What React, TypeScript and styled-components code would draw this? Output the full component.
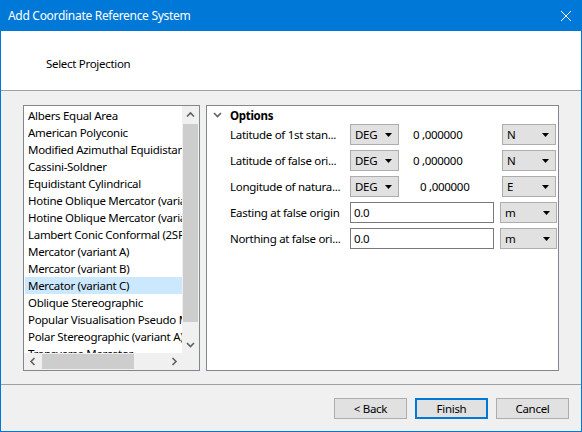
import React from "react";
import styled, { createGlobalStyle } from "styled-components";

const Global = createGlobalStyle`
  html, body { margin: 0; padding: 0; width: 582px; height: 432px; overflow: hidden; background: #f0f0f0; }
  body { font-family: "Noto Sans", "Segoe UI", sans-serif; font-size: 11.5px; letter-spacing: -0.3px; color: #000; }
  * { box-sizing: border-box; }
`;

const Window = styled.div`
  width: 582px;
  height: 432px;
  display: flex;
  flex-direction: column;
  border: 1px solid #0078d7;
  border-top: none;
  background: #f0f0f0;
`;

const TitleBar = styled.div`
  height: 31px;
  flex: none;
  background: #0078d7;
  color: #fff;
  display: flex;
  align-items: center;
  justify-content: space-between;
  padding: 0 10px 0 7px;
  font-size: 12px;
`;

const Header = styled.div`
  height: 60px;
  flex: none;
  background: #fff;
  border-bottom: 1px solid #a0a0a0;
  padding: 25px 0 0 45px;
  line-height: 16px;
`;

const Body = styled.div`
  flex: 1;
  display: flex;
  gap: 6px;
  padding: 14px 22px 13px 22px;
`;

const ListBox = styled.div`
  width: 177px;
  height: 266px;
  flex: none;
  border: 1px solid #828790;
  background: #fff;
  display: grid;
  grid-template-columns: 1fr 17px;
  grid-template-rows: 1fr 17px;
`;

const Items = styled.div`
  overflow: hidden;
  padding: 1px 0 0 1px;
`;

const Item = styled.div<{ $selected?: boolean }>`
  height: 17px;
  line-height: 17px;
  padding-left: 3px;
  white-space: nowrap;
  overflow: hidden;
  background: ${(p) => (p.$selected ? "#cce8ff" : "transparent")};
`;

const VScroll = styled.div`
  background: #f0f0f0;
  display: flex;
  flex-direction: column;
`;

const HScroll = styled.div`
  background: #f0f0f0;
  display: flex;
`;

const Corner = styled.div`
  background: #f0f0f0;
`;

const ArrowBtn = styled.div`
  width: 17px;
  height: 17px;
  flex: none;
  display: flex;
  align-items: center;
  justify-content: center;
`;

const VTrack = styled.div`
  flex: 1;
  padding: 1px 1px 0 1px;
`;

const VThumb = styled.div<{ $size: number }>`
  height: ${(p) => p.$size}px;
  background: #cdcdcd;
`;

const HTrack = styled.div`
  flex: 1;
  padding: 1px 0 1px 1px;
`;

const HThumb = styled.div<{ $size: number }>`
  width: ${(p) => p.$size}px;
  height: 100%;
  background: #cdcdcd;
`;

const Panel = styled.div`
  width: 353px;
  height: 266px;
  flex: none;
  border: 1px solid #828790;
  background: #fff;
  display: flex;
  flex-direction: column;
`;

const GroupHeader = styled.div`
  height: 18px;
  display: flex;
  align-items: center;
  padding-left: 6px;
  gap: 8px;
  font-weight: bold;
`;

const Rows = styled.div`
  display: flex;
  flex-direction: column;
  gap: 5px;
  padding-left: 23px;
`;

const Row = styled.div`
  height: 21px;
  display: flex;
  align-items: center;
`;

const Label = styled.div`
  width: 120px;
  flex: none;
  white-space: nowrap;
  overflow: hidden;
`;

const Combo = styled.div<{ $w: number }>`
  width: ${(p) => p.$w}px;
  height: 21px;
  flex: none;
  background: #e1e1e1;
  border: 1px solid #adadad;
  display: flex;
  align-items: center;
  justify-content: space-between;
  padding: 0 6px 0 4px;
`;

const Value = styled.div<{ $indent: number; $w: number }>`
  width: ${(p) => p.$w}px;
  flex: none;
  padding-left: ${(p) => p.$indent}px;
  white-space: nowrap;
`;

const Input = styled.div`
  width: 144px;
  height: 21px;
  flex: none;
  background: #fff;
  border: 1px solid #7a7a7a;
  padding-left: 3px;
  display: flex;
  align-items: center;
  margin-right: 6px;
`;

const Footer = styled.div`
  height: 47px;
  flex: none;
  border-top: 1px solid #a0a0a0;
  display: flex;
  justify-content: flex-end;
  align-items: flex-start;
  gap: 8px;
  padding: 13px 12px 0 0;
`;

const Button = styled.div<{ $default?: boolean }>`
  width: 73px;
  height: 21px;
  background: #e1e1e1;
  border: ${(p) => (p.$default ? "2px solid #0078d7" : "1px solid #adadad")};
  display: flex;
  align-items: center;
  justify-content: center;
`;

const DropArrow = () => (
  <svg width="7" height="4" viewBox="0 0 7 4">
    <path d="M0 0 H7 L3.5 4 Z" fill="#000" />
  </svg>
);

const Chevron = ({ dir, color = "#606060" }: { dir: "up" | "down" | "left" | "right"; color?: string }) => {
  const paths: Record<string, string> = {
    up: "M1 5.5 L4.5 2 L8 5.5",
    down: "M1 2 L4.5 5.5 L8 2",
    left: "M5.5 1 L2 4.5 L5.5 8",
    right: "M2.5 1 L6 4.5 L2.5 8",
  };
  const horizontal = dir === "left" || dir === "right";
  return (
    <svg width={horizontal ? 8 : 9} height={horizontal ? 9 : 8} viewBox={horizontal ? "0 0 8 9" : "0 0 9 8"}>
      <path d={paths[dir]} fill="none" stroke={color} strokeWidth="1.6" />
    </svg>
  );
};

const CloseIcon = () => (
  <svg width="10" height="10" viewBox="0 0 10 10">
    <path d="M0 0 L10 10 M10 0 L0 10" stroke="#fff" strokeWidth="1" />
  </svg>
);

const projections = [
  "Albers Equal Area",
  "American Polyconic",
  "Modified Azimuthal Equidistant",
  "Cassini-Soldner",
  "Equidistant Cylindrical",
  "Hotine Oblique Mercator (variant A)",
  "Hotine Oblique Mercator (variant B)",
  "Lambert Conic Conformal (2SP)",
  "Mercator (variant A)",
  "Mercator (variant B)",
  "Mercator (variant C)",
  "Oblique Stereographic",
  "Popular Visualisation Pseudo Mercator",
  "Polar Stereographic (variant A)",
  "Transverse Mercator",
];

const angleRows = [
  { label: "Latitude of 1st stan...", dir: "N", indent: 14 },
  { label: "Latitude of false ori...", dir: "N", indent: 14 },
  { label: "Longitude of natura...", dir: "E", indent: 21 },
];

const distRows = ["Easting at false origin", "Northing at false ori..."];

export default function App() {
  return (
    <>
      <Global />
      <Window>
        <TitleBar>
          <span>Add Coordinate Reference System</span>
          <CloseIcon />
        </TitleBar>
        <Header>Select Projection</Header>
        <Body>
          <ListBox>
            <Items>
              {projections.map((p) => (
                <Item key={p} $selected={p === "Mercator (variant C)"}>
                  {p}
                </Item>
              ))}
            </Items>
            <VScroll>
              <ArrowBtn>
                <Chevron dir="up" />
              </ArrowBtn>
              <VTrack>
                <VThumb $size={198} />
              </VTrack>
              <ArrowBtn>
                <Chevron dir="down" />
              </ArrowBtn>
            </VScroll>
            <HScroll>
              <ArrowBtn>
                <Chevron dir="left" />
              </ArrowBtn>
              <HTrack>
                <HThumb $size={92} />
              </HTrack>
              <ArrowBtn>
                <Chevron dir="right" />
              </ArrowBtn>
            </HScroll>
            <Corner />
          </ListBox>
          <Panel>
            <GroupHeader>
              <Chevron dir="down" />
              <span>Options</span>
            </GroupHeader>
            <Rows>
              {angleRows.map((r) => (
                <Row key={r.label}>
                  <Label>{r.label}</Label>
                  <Combo $w={49}>
                    <span>DEG</span>
                    <DropArrow />
                  </Combo>
                  <Value $indent={r.indent} $w={103}>
                    0 ,000000
                  </Value>
                  <Combo $w={54}>
                    <span>{r.dir}</span>
                    <DropArrow />
                  </Combo>
                </Row>
              ))}
              {distRows.map((l) => (
                <Row key={l}>
                  <Label>{l}</Label>
                  <Input>0.0</Input>
                  <Combo $w={57}>
                    <span>m</span>
                    <DropArrow />
                  </Combo>
                </Row>
              ))}
            </Rows>
          </Panel>
        </Body>
        <Footer>
          <Button>&lt; Back</Button>
          <Button $default>Finish</Button>
          <Button>Cancel</Button>
        </Footer>
      </Window>
    </>
  );
}
